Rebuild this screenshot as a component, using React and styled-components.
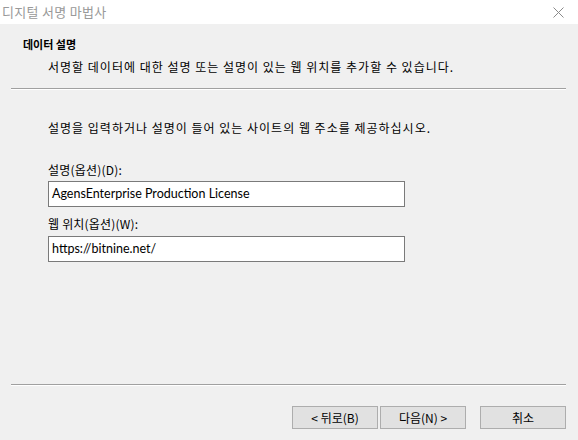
import styled, { createGlobalStyle } from "styled-components"

const GlobalStyle = createGlobalStyle`
  body {
    margin : 0;
    background : #f0f0f0;
    font-family : "Noto Sans", "Noto Sans CJK KR", sans-serif;
  }
`;

const Window = styled.div`
  width : 578px;
  height : 440px;
  display : flex;
  flex-flow : column;
  background-color : #f0f0f0;
  color : #000;
  font-size : 12px;
  line-height : 16px;
  overflow : hidden;
`;

const TitleBar = styled.div`
  height : 24px;
  flex : none;
  background-color : #fff;
  display : flex;
  align-items : center;
  justify-content : space-between;
  padding : 0 14px 0 2px;
`;

const Title = styled.div`
  font-family : "Noto Sans CJK KR", sans-serif;
  font-size : 13px;
  color : #999;
  letter-spacing : 0.3px;
`;

const Body = styled.div`
  flex : 1;
  display : flex;
  flex-flow : column;
`;

const Header = styled.div`
  padding : 12px 0 0 23px;
`;

const HeaderTitle = styled.div`
  font-family : "Noto Sans CJK KR", sans-serif;
  font-weight : 700;
  font-size : 11px;
`;

const Sentence = styled.div`
  font-family : "Noto Sans CJK KR", sans-serif;
  letter-spacing : 1px;
`;

const HeaderDesc = styled(Sentence)`
  margin : 7px 0 0 25px;
`;

const Separator = styled.div`
  margin : ${props => props.top}px 12px 0 11px;
  border-top : 1px solid #a0a0a0;
  border-bottom : 1px solid #fff;
`;

const Content = styled.div`
  flex : 1;
  padding : 30px 0 0 48px;
  display : flex;
  flex-flow : column;
`;

const Instruction = styled(Sentence)`
  margin-bottom : 26px;
`;

const Label = styled.div`
  font-family : "Noto Sans CJK KR", sans-serif;
  letter-spacing : 0.2px;
`;

const Field = styled.div`
  width : 357px;
  height : 26px;
  box-sizing : border-box;
  margin : ${props => props.gap}px 0 9px;
  border : 1px solid #7a7a7a;
  background-color : #fff;
  display : flex;
  align-items : center;
  padding-left : 3px;
  font-family : Lato, "Noto Sans CJK KR", sans-serif;
  font-size : 12.5px;
`;

const Footer = styled.div`
  display : flex;
  justify-content : flex-end;
  padding : 20px 12px 11px 0;
`;

const Button = styled.div`
  width : 86px;
  height : 23px;
  box-sizing : border-box;
  margin-left : ${props => props.gap}px;
  background-color : #e1e1e1;
  border : 1px solid #adadad;
  display : flex;
  align-items : center;
  justify-content : center;
  font-family : "Noto Sans CJK KR", sans-serif;
`;

const Close = () => (
  <svg width="11" height="11" viewBox="0 0 11 11">
    <path d="M0.5 0.5 L10.5 10.5 M10.5 0.5 L0.5 10.5" stroke="#8a8a8a" strokeWidth="1" />
  </svg>
);

const App = () => {
  return (<>
    <GlobalStyle />
    <Window>
      <TitleBar>
        <Title>디지털 서명 마법사</Title>
        <Close />
      </TitleBar>
      <Body>
        <Header>
          <HeaderTitle>데이터 설명</HeaderTitle>
          <HeaderDesc>서명할 데이터에 대한 설명 또는 설명이 있는 웹 위치를 추가할 수 있습니다.</HeaderDesc>
        </Header>
        <Separator top={13} />
        <Content>
          <Instruction>설명을 입력하거나 설명이 들어 있는 사이트의 웹 주소를 제공하십시오.</Instruction>
          <Label>설명(옵션)(D):</Label>
          <Field gap={3}>AgensEnterprise Production License</Field>
          <Label>웹 위치(옵션)(W):</Label>
          <Field gap={4}>https://bitnine.net/</Field>
        </Content>
        <Separator top={0} />
        <Footer>
          <Button gap={0}>&lt; 뒤로(B)</Button>
          <Button gap={2}>다음(N) &gt;</Button>
          <Button gap={14}>취소</Button>
        </Footer>
      </Body>
    </Window>
  </>)
}

export default App
